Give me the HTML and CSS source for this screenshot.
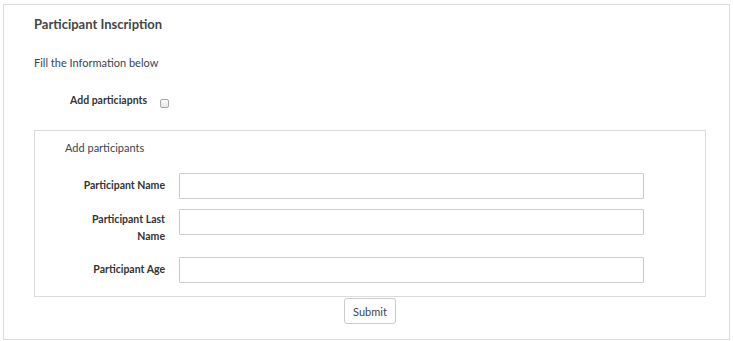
FILE: index.html
```html
<!DOCTYPE html>
<html>
<head>
<meta charset="utf-8">
<link rel="stylesheet" href="styles.css">
</head>
<body>
<div class="panel">
  <h1 class="title">Participant Inscription</h1>
  <p class="intro">Fill the Information below</p>
  <div class="toggle-row">
    <span class="toggle-label">Add particiapnts</span>
    <span class="checkbox"></span>
  </div>
  <div class="group">
    <div class="fieldset">
      <div class="legend">Add participants</div>
      <div class="row">
        <label class="label">Participant Name</label>
        <span class="input"></span>
      </div>
      <div class="row row-tall">
        <label class="label">Participant Last Name</label>
        <span class="input"></span>
      </div>
      <div class="row">
        <label class="label">Participant Age</label>
        <span class="input"></span>
      </div>
    </div>
    <div class="actions">
      <button class="btn">Submit</button>
    </div>
  </div>
</div>
</body>
</html>
```
FILE: styles.css
```css
* { box-sizing: border-box; }
html, body { margin: 0; padding: 0; background: #fff; }
body {
  font-family: "Lato", "Open Sans", sans-serif;
  color: #333;
  padding: 4px 3px 0 3px;
}
.panel {
  width: 727px;
  height: 336px;
  border: 1px solid #dcdcdc;
  padding: 0 23px 0 30px;
}
.title {
  margin: 9px 0 0 0;
  font-size: 13px;
  font-weight: 700;
  line-height: 20px;
  color: #454545;
}
.intro {
  margin: 21px 0 0 0;
  font-size: 11px;
  line-height: 16px;
  color: #3a4452;
}
.toggle-row {
  display: flex;
  align-items: flex-start;
  margin: 21px 0 0 36px;
  height: 20px;
}
.toggle-label {
  font-size: 10.5px;
  font-weight: 700;
  line-height: 16px;
  color: #333;
}
.checkbox {
  width: 9px;
  height: 9px;
  margin: 7px 0 0 13px;
  border: 1px solid #a8a8a8;
  border-radius: 2px;
  background: linear-gradient(#fcfcfc, #e6e6e6);
}
.group {
  margin-top: 18px;
  width: 672px;
}
.fieldset {
  border: 1px solid #dcdcdc;
  height: 167px;
  padding: 9px 61px 0 0;
}
.legend {
  margin-left: 30px;
  font-size: 11px;
  line-height: 16px;
  color: #3a4452;
}
.row {
  display: flex;
  align-items: flex-start;
  margin-top: 17px;
}
.row + .row { margin-top: 10px; }
.row-tall { height: 38px; }
.label {
  width: 130px;
  padding-top: 4px;
  text-align: right;
  font-size: 10.5px;
  font-weight: 700;
  line-height: 17px;
  color: #333;
}
.row-tall .label { padding: 2px 0 0 50px; }
.input {
  margin-left: 14px;
  flex: 1;
  height: 26px;
  border: 1px solid #cccccc;
  border-radius: 1px;
}
.actions {
  display: flex;
  justify-content: center;
  padding-top: 1px;
}
.btn {
  width: 52px;
  height: 26px;
  border: 1px solid #cccccc;
  border-radius: 3px;
  background: #fff;
  font-family: "Lato", "Open Sans", sans-serif;
  font-size: 11px;
  color: #3a4452;
  padding: 0;
}
```
